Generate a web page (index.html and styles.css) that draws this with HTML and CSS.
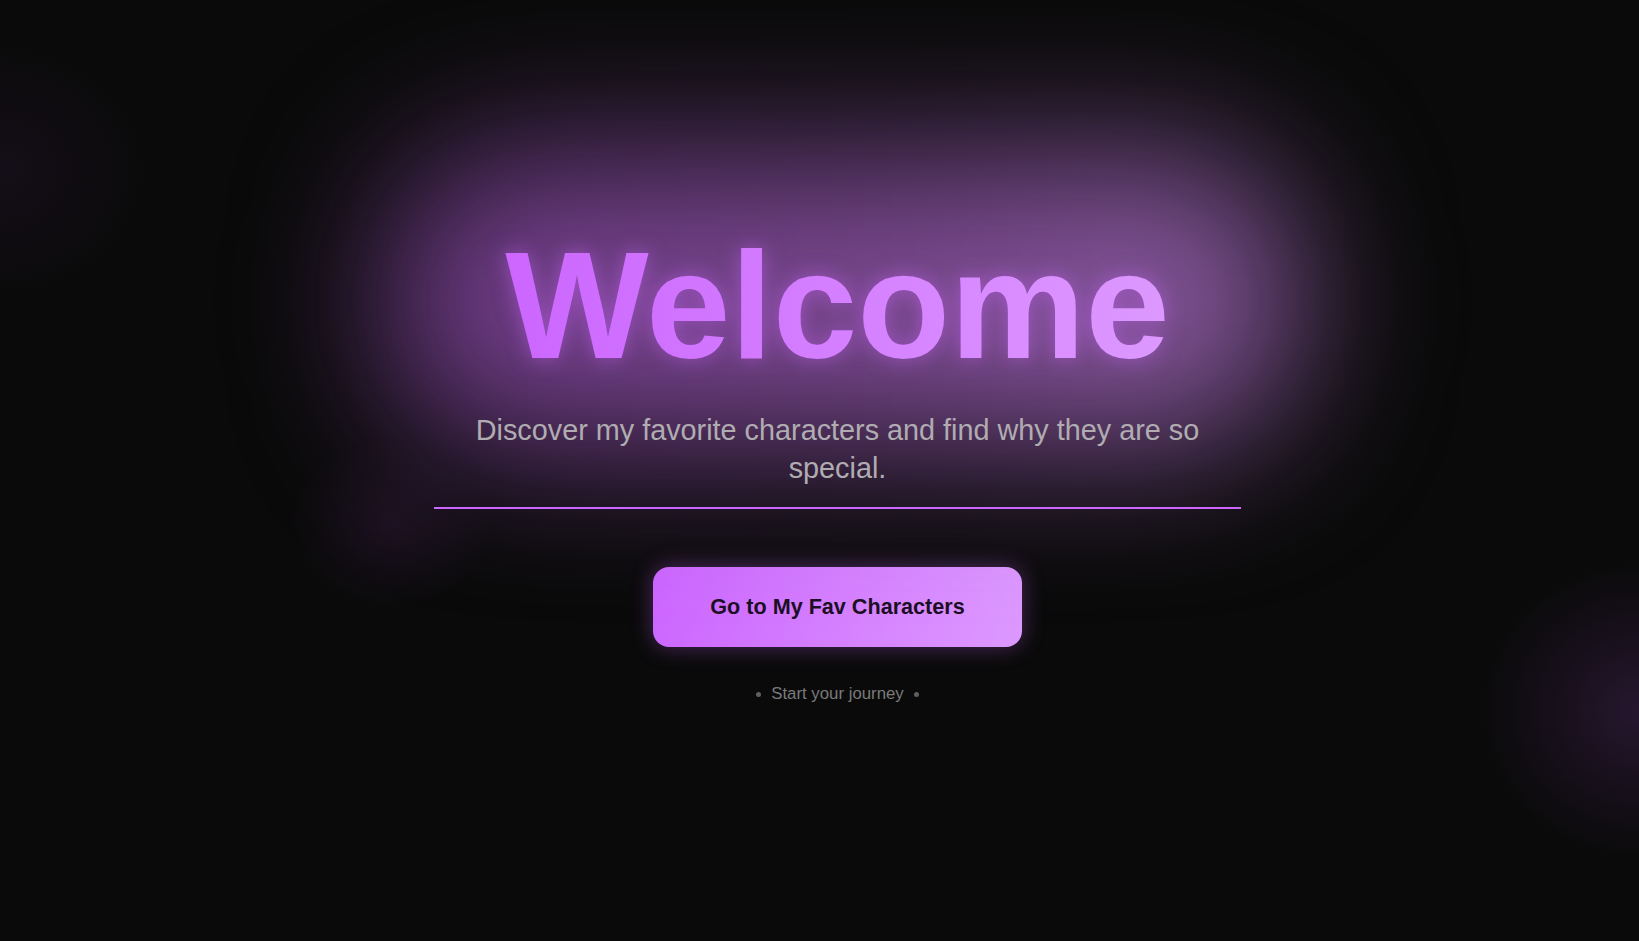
FILE: index.html
```html
<!DOCTYPE html>
<html lang="en">
<head>
<meta charset="utf-8">
<title>Welcome</title>
<link rel="stylesheet" href="styles.css">
</head>
<body>
<main class="page">
  <span class="orb orb-tl"></span>
  <span class="orb orb-bl"></span>
  <span class="orb orb-r"></span>
  <section class="content">
    <div class="title-wrap">
      <span class="title-glow"></span>
      <h1 class="title">Welcome</h1>
    </div>
    <p class="subtitle">Discover my favorite characters and find why they are so special.</p>
    <a class="cta" href="#">Go to My Fav Characters</a>
    <div class="journey"><span class="dot"></span><span>Start your journey</span><span class="dot"></span></div>
  </section>
</main>
</body>
</html>
```
FILE: styles.css
```css
html, body {
  margin: 0;
  padding: 0;
  background: #0a0a0a;
}

body {
  font-family: "Liberation Sans", Arial, sans-serif;
  min-height: 100vh;
  overflow: hidden;
}

.page {
  position: relative;
  min-height: 100vh;
  box-sizing: border-box;
  display: flex;
  justify-content: center;
  padding: 229px 0 0 36px;
  overflow: hidden;
}

.orb {
  position: absolute;
  border-radius: 50%;
  pointer-events: none;
}

.orb-tl {
  left: -150px;
  top: 40px;
  width: 300px;
  height: 260px;
  background: radial-gradient(closest-side, rgba(60, 30, 75, 0.22), rgba(60, 30, 75, 0));
}

.orb-bl {
  left: 290px;
  top: 440px;
  width: 200px;
  height: 170px;
  background: radial-gradient(closest-side, rgba(80, 40, 100, 0.22), rgba(80, 40, 100, 0));
}

.orb-r {
  right: -160px;
  top: 560px;
  width: 320px;
  height: 300px;
  background: radial-gradient(closest-side, rgba(110, 55, 140, 0.28), rgba(110, 55, 140, 0));
}

.content {
  position: relative;
  width: 807px;
  display: flex;
  flex-direction: column;
  align-items: center;
}

.title-wrap {
  position: relative;
  width: 100%;
  display: flex;
  justify-content: center;
}

.title-glow {
  position: absolute;
  left: -45px;
  right: -55px;
  top: -75px;
  bottom: -65px;
  border-radius: 120px;
  background: linear-gradient(90deg, rgba(135, 70, 165, 0.82), rgba(145, 85, 170, 0.82) 55%, rgba(160, 105, 185, 0.85));
  filter: blur(75px);
  z-index: 0;
}

.title {
  position: relative;
  z-index: 1;
  margin: 0;
  font-size: 152px;
  line-height: 1;
  font-weight: 700;
  background: linear-gradient(90deg, #cc66ff, #dd99ff);
  -webkit-background-clip: text;
  background-clip: text;
  color: transparent;
  filter: drop-shadow(0 0 10px rgba(204, 102, 255, 0.5));
}

.subtitle {
  position: relative;
  z-index: 1;
  margin: 30px 0 0;
  width: 100%;
  box-sizing: border-box;
  padding: 0 36px 20px;
  border-bottom: 2px solid #cc66ff;
  font-size: 28.8px;
  line-height: 38px;
  color: #b0acb2;
  text-align: center;
}

.cta {
  margin-top: 58px;
  display: block;
  padding: 28px 57px;
  line-height: 24px;
  font-size: 21.6px;
  font-weight: 700;
  color: #1c0f24;
  text-decoration: none;
  border-radius: 16px;
  background: linear-gradient(100deg, #cc66ff, #dd99ff);
  box-shadow: 0 0 22px rgba(204, 102, 255, 0.35);
}

.journey {
  margin-top: 37px;
  display: flex;
  align-items: center;
  gap: 10px;
  font-size: 16.8px;
  color: #7a7a7a;
}

.dot {
  width: 5px;
  height: 5px;
  border-radius: 50%;
  background: #5f5f5f;
}
```
